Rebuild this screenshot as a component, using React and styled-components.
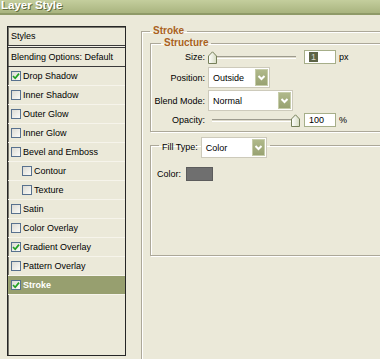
import React from 'react'
import styled, { createGlobalStyle } from 'styled-components'

const GlobalStyle = createGlobalStyle`
  html, body {
    margin: 0;
    padding: 0;
    background: #ebe9d9;
  }
  body {
    font-family: "Liberation Sans", Arial, sans-serif;
  }
`

const Window = styled.div`
  width: 380px;
  height: 359px;
  overflow: hidden;
  background: #ebe9d9;
  font-size: 9px;
  color: #000;
`

const TitleBar = styled.div`
  height: 13px;
  overflow: hidden;
  padding-left: 1px;
  background: linear-gradient(#c4ce9d, #a9b47f);
  border-bottom: 2px solid #8f9a68;
`

TitleBar.Text = styled.div`
  margin-top: -1px;
  font-weight: 700;
  font-size: 11.5px;
  line-height: 13px;
  color: #fff;
  text-shadow: 1px 1px 0 #606b3d;
`

const Body = styled.div`
  display: flex;
  align-items: flex-start;
  padding: 10px 0 0 7px;
`

const StyleList = styled.div`
  flex-shrink: 0;
  box-sizing: border-box;
  width: 119px;
  height: 330px;
  margin-top: 1px;
  border: 1px solid #262626;
  box-shadow: inset 1px 1px 0 #77766c;
`

StyleList.Header = styled.div`
  height: 18px;
  line-height: 18px;
  padding-left: 3px;
`

StyleList.Divider = styled.div`
  height: 1px;
  background: #f4f2e8;
  border-top: 1px solid #3a3a3a;
  border-bottom: 1px solid #3a3a3a;
`

StyleList.Default = styled.div`
  height: 18px;
  line-height: 18px;
  padding-left: 3px;
  border-bottom: 1px solid #3a3a3a;
`

StyleList.Row = styled.div`
  display: flex;
  align-items: center;
  gap: 2px;
  height: 18px;
  padding-left: ${props => props.$indent ? 14 : 3}px;
  border-bottom: 1px solid #f6f4eb;
  ${props => props.$selected && `
    background: #979f6f;
    color: #fff;
    font-weight: 700;
  `}
`

const Check = styled.span`
  flex-shrink: 0;
  box-sizing: border-box;
  width: 10px;
  height: 10px;
  border: 1px solid #58718e;
  background: linear-gradient(135deg, #dcdbd4, #fbfbf8);
  display: flex;
  align-items: center;
  justify-content: center;
`

const Settings = styled.div`
  flex-shrink: 0;
  width: 260px;
  margin-left: 15px;
`

const Group = styled.fieldset`
  margin: ${props => props.$top || 0}px 0 0 0;
  padding: 0 0 ${props => props.$bottom || 0}px ${props => props.$pad || 0}px;
  min-width: 0;
  min-height: ${props => props.$minHeight || 0}px;
  border: 1px solid #aca899;
  box-shadow: 1px 1px 0 #fff, inset 1px 1px 0 #fff;
`

Group.Legend = styled.legend`
  margin-left: ${props => props.$shift || 0}px;
  padding: 0 3px;
  font-weight: 700;
  font-size: 10px;
  line-height: 12px;
  color: #a9611d;
`

Group.Picker = styled.legend`
  display: flex;
  align-items: flex-start;
  gap: 3px;
  height: 16px;
  margin-left: ${props => props.$shift || 0}px;
  padding: 0 3px;
`

const Fields = styled.div`
  display: grid;
  grid-template-columns: 50px auto;
  grid-template-rows: 16px 21px 21px 14px;
  column-gap: 3px;
  row-gap: 2px;
  align-items: center;
`

const Label = styled.div`
  justify-self: end;
  white-space: nowrap;
  line-height: ${props => props.$tall ? '21px' : 'normal'};
`

const Control = styled.div`
  display: flex;
  align-items: center;
`

const Slider = styled.div`
  position: relative;
  width: 92px;
  height: 13px;
  display: flex;
  align-items: center;
  margin-right: 4px;
`

Slider.Track = styled.div`
  box-sizing: border-box;
  width: 100%;
  height: 3px;
  margin: 0 4px;
  background: #dedbcc;
  border-top: 1px solid #9d9b8e;
  border-bottom: 1px solid #fff;
`

Slider.Thumb = styled.svg`
  position: absolute;
  top: 0;
`

const NumberBox = styled.div`
  box-sizing: border-box;
  width: 32px;
  height: 14px;
  padding-left: 4px;
  background: #fff;
  border: 1px solid #a6ae89;
  line-height: 12px;
  display: flex;
  align-items: center;
`

NumberBox.Selected = styled.span`
  padding: 0 2px;
  line-height: 10px;
  background: #5d6446;
  color: #d9d9cc;
`

const Unit = styled.span`
  margin-left: 3px;
`

const Select = styled.div`
  box-sizing: border-box;
  display: flex;
  align-items: center;
  width: ${props => props.$width}px;
  height: 21px;
  padding: 1px 1px 1px 4px;
  background: #fff;
  border: 1px solid #cdcabb;
`

Select.Value = styled.span`
  flex: 1;
`

Select.Button = styled.span`
  box-sizing: border-box;
  width: 13px;
  height: 17px;
  background: linear-gradient(#b0b98b, #98a272);
  border: 1px solid #c6cca9;
  display: flex;
  align-items: center;
  justify-content: center;
`

const ColorRow = styled.div`
  display: flex;
  align-items: center;
  gap: 5px;
  margin-top: 14px;
`

const Swatch = styled.div`
  width: 27px;
  height: 14px;
  box-sizing: border-box;
  background: #6f6f6f;
  border: 1px solid #5c5c5c;
`

const effects = [
  { name: 'Drop Shadow', checked: true },
  { name: 'Inner Shadow' },
  { name: 'Outer Glow' },
  { name: 'Inner Glow' },
  { name: 'Bevel and Emboss' },
  { name: 'Contour', indent: true },
  { name: 'Texture', indent: true },
  { name: 'Satin' },
  { name: 'Color Overlay' },
  { name: 'Gradient Overlay', checked: true },
  { name: 'Pattern Overlay' },
  { name: 'Stroke', checked: true, selected: true }
]

const CheckBox = ({ checked }) => (
  <Check>
    {checked && (
      <svg width='8' height='8' viewBox='0 0 8 8'>
        <path d='M1 4 L3.2 6.3 L7 1.6' fill='none' stroke='#22a022' strokeWidth='1.7' />
      </svg>
    )}
  </Check>
)

const Chevron = () => (
  <svg width='9' height='9' viewBox='0 0 9 9'>
    <path d='M1.5 3 L4.5 6 L7.5 3' fill='none' stroke='#fff' strokeWidth='2' />
  </svg>
)

const Dropdown = ({ width, value }) => (
  <Select $width={width}>
    <Select.Value>{value}</Select.Value>
    <Select.Button><Chevron /></Select.Button>
  </Select>
)

const RangeSlider = ({ value, max }) => (
  <Slider>
    <Slider.Track />
    <Slider.Thumb
      width='9'
      height='13'
      viewBox='0 0 9 13'
      style={{ left: Math.round((value / max) * 83) }}
    >
      <defs>
        <linearGradient id='thumbFill' x1='0' y1='0' x2='1' y2='0'>
          <stop offset='0' stopColor='#ffffff' />
          <stop offset='1' stopColor='#d6dcc2' />
        </linearGradient>
      </defs>
      <path d='M0.5 12.5 V5 L4.5 0.8 L8.5 5 V12.5 Z' fill='url(#thumbFill)' stroke='#76805a' />
    </Slider.Thumb>
  </Slider>
)

export default function App () {
  return (
    <Window>
      <GlobalStyle />
      <TitleBar>
        <TitleBar.Text>Layer Style</TitleBar.Text>
      </TitleBar>
      <Body>
        <StyleList>
          <StyleList.Header>Styles</StyleList.Header>
          <StyleList.Divider />
          <StyleList.Default>Blending Options: Default</StyleList.Default>
          {effects.map(item => (
            <StyleList.Row key={item.name} $indent={item.indent} $selected={item.selected}>
              <CheckBox checked={item.checked} />
              {item.name}
            </StyleList.Row>
          ))}
        </StyleList>

        <Settings>
          <Group $pad={8} $minHeight={345}>
            <Group.Legend>Stroke</Group.Legend>
            <Group $pad={4} $bottom={4}>
              <Group.Legend $shift={6}>Structure</Group.Legend>
              <Fields>
                <Label>Size:</Label>
                <Control>
                  <RangeSlider value={1} max={250} />
                  <NumberBox><NumberBox.Selected>1</NumberBox.Selected></NumberBox>
                  <Unit>px</Unit>
                </Control>

                <Label>Position:</Label>
                <Control><Dropdown width={62} value='Outside' /></Control>

                <Label>Blend Mode:</Label>
                <Control><Dropdown width={85} value='Normal' /></Control>

                <Label>Opacity:</Label>
                <Control>
                  <RangeSlider value={100} max={100} />
                  <NumberBox>100</NumberBox>
                  <Unit>%</Unit>
                </Control>
              </Fields>
            </Group>

            <Group $top={5} $pad={6} $bottom={74}>
              <Group.Picker $shift={2}>
                <Label $tall>Fill Type:</Label>
                <Dropdown width={66} value='Color' />
              </Group.Picker>
              <ColorRow>
                <span>Color:</span>
                <Swatch />
              </ColorRow>
            </Group>
          </Group>
        </Settings>
      </Body>
    </Window>
  )
}
